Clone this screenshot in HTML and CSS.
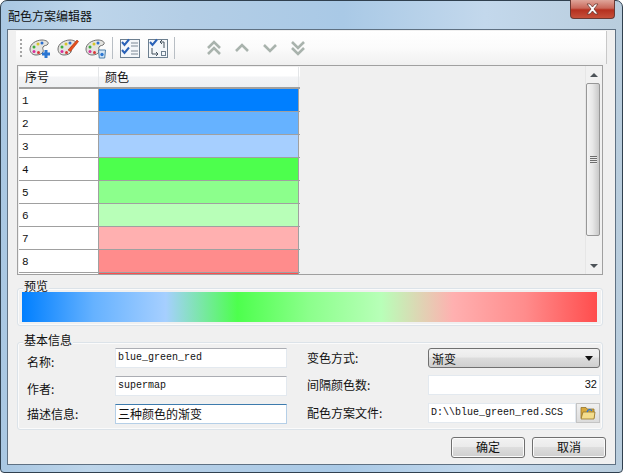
FILE: index.html
```html
<!DOCTYPE html>
<html lang="zh-CN">
<head>
  <meta charset="UTF-8" />
  <title>配色方案编辑器</title>
  <link rel="stylesheet" href="styles.css">
</head>
<body>
  <svg class="defs" width="0" height="0">
    <symbol id="palette" viewBox="0 0 22 22">
      <path d="M1 12C1 7 7 3 13 3c4 0 7 2 6 4-1 2-4 1-5 3-1 2 1 3 0 5-1 2-4 3-7 3-3 0-6-2-6-6z" fill="#e4e4e0" stroke="#6e6e6e"/>
      <circle cx="5" cy="10" r="1.5" fill="#3fae3a"/>
      <circle cx="9" cy="7" r="1.5" fill="#d8c52a"/>
      <circle cx="13" cy="6" r="1.5" fill="#2c6fd0"/>
      <circle cx="5" cy="14.5" r="1.5" fill="#d8309c"/>
      <circle cx="9.500" cy="15.500" r="1.500" fill="#d83a3a"/>
    </symbol>
  </svg>

  <div class="window">
    <div class="titlebar">
      <span class="title">配色方案编辑器</span>
      <div class="close">
        <svg width="17" height="12" viewBox="0 0 17 12"><path d="M3 1h3l2.500 3L11 1h3l-4 5 4 5h-3L8.500 8 6 11H3l4-5z" fill="#fff" stroke="#6b3a34" stroke-width=".8"/></svg>
      </div>
    </div>

    <div class="client">
      <div class="toolbar">
        <span class="grip"></span>
        <svg class="tool" width="22" height="22"><use href="#palette"/><path d="M13 17h8M17 13v8" stroke="#2a76d2" stroke-width="3"/></svg>
        <svg class="tool" width="22" height="22"><use href="#palette"/><path d="M11 13l9-10 1.500 1.500-8 10z" fill="#e8501c" stroke="#a83410" stroke-width=".6"/></svg>
        <svg class="tool" width="22" height="22"><use href="#palette"/><path d="M13.500 13h7l-.8 8h-5.400z" fill="#d5e6f4" stroke="#4c7ea8"/><circle cx="17" cy="17.500" r="1.700" fill="#2a76d2"/></svg>
        <span class="sep"></span>
        <svg class="tool" width="20" height="20" viewBox="0 0 20 20">
          <rect x=".5" y="1.500" width="19" height="18" fill="#f4f7fa" stroke="#6d7f8f"/>
          <path d="M11 5h7M11 8h7M11 13h7M11 16h7" stroke="#7c8a96" stroke-width="1.200"/>
          <path d="M2 4l2.500 3L9 1.500M2 12l2.500 3L9 9.500" fill="none" stroke="#2a62b8" stroke-width="2"/>
        </svg>
        <svg class="tool tool-b" width="20" height="20" viewBox="0 0 20 20">
          <rect x=".5" y="1.500" width="19" height="18" fill="#f4f7fa" stroke="#6d7f8f"/>
          <path d="M2 4l2.500 3L9 1.500" fill="none" stroke="#2a62b8" stroke-width="2"/>
          <path d="M4 10v6h6M8 14l2 2-2 2M16 10V4h-4M14 2l-2 2 2 2" fill="none" stroke="#44525e"/>
          <rect x="13.500" y="13.500" width="4" height="4" fill="none" stroke="#6d7f8f"/>
        </svg>
        <span class="sep sep-b"></span>
        <svg class="arrow" width="14" height="16" viewBox="0 0 14 16"><path d="M1 8l6-6 6 6M1 14l6-6 6 6" fill="none" stroke="#a9b3ad" stroke-width="2.600"/></svg>
        <svg class="arrow" width="14" height="16" viewBox="0 0 14 16"><path d="M1 11l6-6 6 6" fill="none" stroke="#a9b3ad" stroke-width="2.600"/></svg>
        <svg class="arrow" width="14" height="16" viewBox="0 0 14 16"><path d="M1 5l6 6 6-6" fill="none" stroke="#a9b3ad" stroke-width="2.600"/></svg>
        <svg class="arrow" width="14" height="16" viewBox="0 0 14 16"><path d="M1 2l6 6 6-6M1 8l6 6 6-6" fill="none" stroke="#a9b3ad" stroke-width="2.600"/></svg>
      </div>

      <div class="content">
        <div class="grid-panel">
          <div class="grid">
            <div class="row head"><div class="c1">序号</div><div class="c2">颜色</div></div>
            <div class="row"><div class="c1">1</div><div class="c2 s1"></div></div>
            <div class="row"><div class="c1">2</div><div class="c2 s2"></div></div>
            <div class="row"><div class="c1">3</div><div class="c2 s3"></div></div>
            <div class="row"><div class="c1">4</div><div class="c2 s4"></div></div>
            <div class="row"><div class="c1">5</div><div class="c2 s5"></div></div>
            <div class="row"><div class="c1">6</div><div class="c2 s6"></div></div>
            <div class="row"><div class="c1">7</div><div class="c2 s7"></div></div>
            <div class="row"><div class="c1">8</div><div class="c2 s8"></div></div>
            <div class="row"><div class="c1"></div><div class="c2 s9"></div></div>
          </div>
          <div class="scrollbar">
            <div class="sb-btn"><span class="tri up"></span></div>
            <div class="thumb"><span class="thumb-grip"></span></div>
            <div class="sb-space"></div>
            <div class="sb-btn"><span class="tri down"></span></div>
          </div>
        </div>

        <div class="group-title">预览</div>
        <div class="group preview"><div class="gradient"></div></div>

        <div class="group-title basic-title">基本信息</div>
        <div class="group form">
          <div class="form-col">
            <div class="field f-a"><span class="lbl lbl-low">名称:</span><div class="box mono">blue_green_red</div></div>
            <div class="field f-b"><span class="lbl lbl-low2">作者:</span><div class="box mono">supermap</div></div>
            <div class="field"><span class="lbl">描述信息:</span><div class="box focus">三种颜色的渐变</div></div>
          </div>
          <div class="form-col right">
            <div class="field f-a"><span class="lbl">变色方式:</span>
              <div class="select"><span>渐变</span><span class="tri down dark"></span></div>
            </div>
            <div class="field f-c"><span class="lbl">间隔颜色数:</span><div class="box num">32</div></div>
            <div class="field"><span class="lbl">配色方案文件:</span>
              <div class="file">
                <div class="box mono file-path">D:\\blue_green_red.SCS</div>
                <div class="folder-btn">
                  <svg width="16" height="14" viewBox="0 0 16 14">
                    <path d="M1 3V1.500h5l1 1.500h7v9H1z" fill="#d9a93c" stroke="#94742a" stroke-width=".8"/>
                    <path d="M1 13l2-7h12l-1 7z" fill="#f4dd8c" stroke="#94742a" stroke-width=".8"/>
                    <path d="M7 6c1-3 4-3 5-1" fill="none" stroke="#2a76d2" stroke-width="1.200"/>
                  </svg>
                </div>
              </div>
            </div>
          </div>
        </div>

        <div class="buttons">
          <div class="btn">确定</div>
          <div class="btn">取消</div>
        </div>
      </div>
    </div>
  </div>
</body>
</html>
```

FILE: styles.css
```css
html, body {
  margin: 0;
  padding: 0;
}
body {
  width: 623px;
  height: 473px;
  overflow: hidden;
  background: #fff;
  font-family: "Noto Sans CJK SC", "Liberation Sans", sans-serif;
  font-size: 12px;
  color: #111;
}
.defs {
  display: block;
  height: 0;
}
.window {
  box-sizing: border-box;
  width: 623px;
  height: 473px;
  border: 1px solid #30404f;
  border-radius: 7px 7px 4px 4px;
  background: linear-gradient(90deg, #a9c7e2 0%, #bdd5ea 14%, #b4cee6 30%, #a9c9e6 55%, #c3d8ec 78%, #b9cddd 100%);
  padding: 0 6px 7px 6px;
  display: flex;
  flex-direction: column;
}
.titlebar {
  height: 28px;
  display: flex;
  justify-content: space-between;
  flex-shrink: 0;
}
.title {
  margin: 7px 0 0 1px;
  line-height: 16px;
}
.close {
  width: 45px;
  height: 19px;
  margin-top: -1px;
  margin-right: 1px;
  box-sizing: border-box;
  border: 1px solid #6b3a34;
  border-top: 0;
  border-radius: 0 0 4px 4px;
  background: linear-gradient(#dfa59a 0%, #c9685a 45%, #b5301f 55%, #c6503a 100%);
  display: flex;
  align-items: center;
  justify-content: center;
}
.client {
  flex: 1;
  border: 1px solid #5f7183;
  background: #f0f0f0;
  position: relative;
}
.toolbar {
  margin: 1px 8px 0 8px;
  height: 33px;
  background: linear-gradient(#fff 0%, #fbfbfb 50%, #f1f1f1 100%);
  display: flex;
  align-items: center;
  box-sizing: border-box;
  padding-left: 4px;
  border-right: 1px solid #c8c8c8;
}
.grip {
  width: 2px;
  height: 18px;
  background: repeating-linear-gradient(#a5a5a5 0 2px, transparent 2px 4px);
  margin-right: 7px;
}
.tool {
  margin-right: 6px;
}
.tool-b {
  margin-left: 2px;
  margin-right: 0;
}
.sep {
  width: 1px;
  height: 22px;
  background: #b8bec4;
  margin: 0 7px 0 -1px;
}
.sep-b {
  margin-left: 6px;
  margin-right: 32px;
}
.arrow {
  margin-right: 14px;
}
.content {
  padding-left: 9px;
  width: 586px;
}
.grid-panel {
  margin-top: 1px;
  height: 210px;
  box-sizing: border-box;
  border: 1px solid #a0a0a0;
  background: #f0f0f0;
  display: flex;
  justify-content: space-between;
}
.grid {
  width: 281px;
  overflow: hidden;
  padding: 1px 0 0 1px;
  flex-shrink: 0;
}
.row {
  display: flex;
  height: 23px;
  box-sizing: border-box;
  border-bottom: 1px solid #a0a0a0;
}
.row.head {
  height: 22px;
  border-bottom: 2px solid #a0a0a0;
  background: linear-gradient(#fff 0%, #fff 45%, #f3f4f6 50%, #eef0f2 100%);
}
.c1 {
  width: 80px;
  box-sizing: border-box;
  padding-left: 3px;
  background: #fff;
  border-right: 1px solid #a0a0a0;
  line-height: 25px;
  overflow: hidden;
  font-family: "Liberation Mono", monospace;
  font-size: 11px;
}
.c2 {
  width: 200px;
  box-sizing: border-box;
  border-right: 1px solid #a0a0a0;
}
.head .c1, .head .c2 {
  background: transparent;
  border-right: 1px solid #e4e6e8;
  font-family: "Noto Sans CJK SC", sans-serif;
  font-size: 12px;
  line-height: 20px;
  padding-left: 6px;
}
.s1 { background: #007fff; }
.s2 { background: #66b2ff; }
.s3 { background: #a6cfff; }
.s4 { background: #4dff4d; }
.s5 { background: #8cff8c; }
.s6 { background: #b8ffb8; }
.s7 { background: #ffb0b0; }
.s8 { background: #ff8c8c; }
.s9 { background: #ff4d4d; }
.scrollbar {
  width: 16px;
  display: flex;
  flex-direction: column;
  background: #f1f1f1;
  border-left: 1px solid #e6e6e6;
}
.sb-btn {
  height: 17px;
  display: flex;
  align-items: center;
  justify-content: center;
}
.tri {
  width: 0;
  height: 0;
  border-left: 4px solid transparent;
  border-right: 4px solid transparent;
}
.tri.up {
  border-bottom: 4px solid #4d5358;
}
.tri.down {
  border-top: 4px solid #4d5358;
}
.tri.dark {
  border-left-width: 4px;
  border-right-width: 4px;
  border-top: 5px solid #111;
}
.thumb {
  height: 153px;
  margin-left: 0;
  width: 14px;
  box-sizing: border-box;
  border: 1px solid #979797;
  border-radius: 2px;
  background: linear-gradient(90deg, #f4f4f4 0%, #e8e8e8 45%, #c9c9c9 100%);
  display: flex;
  align-items: center;
  justify-content: center;
}
.thumb-grip {
  width: 7px;
  height: 8px;
  background: repeating-linear-gradient(#6d6d6d 0 1px, #e9e9e9 1px 2px);
}
.sb-space {
  flex: 1;
}
.group-title {
  margin: 4px 0 0 6px;
  padding: 0 1px;
  width: max-content;
  background: #f0f0f0;
  line-height: 13px;
  height: 13px;
  position: relative;
  z-index: 1;
}
.basic-title {
  margin-top: 7px;
}
.group {
  box-sizing: border-box;
  margin-top: -4px;
  border: 1px solid #dce3e9;
  box-shadow: inset 0 0 0 1px #fbfbfb;
  border-radius: 3px;
}
.preview {
  height: 38px;
  padding: 3px 5px 0 4px;
}
.gradient {
  height: 30px;
  position: relative;
  z-index: 2;
  background: linear-gradient(90deg, #007fff 0%, #66b2ff 12.500%, #a6cfff 25%, #4dff4d 37.500%, #8cff8c 50%, #b8ffb8 62.500%, #ffb0b0 75%, #ff8c8c 87.500%, #ff4d4d 100%);
}
.form {
  height: 88px;
  padding: 5px 2px 0 9px;
  display: flex;
  justify-content: space-between;
}
.form-col {
  width: 260px;
  display: flex;
  flex-direction: column;
}
.form-col.right {
  width: 293px;
}
.field {
  display: flex;
  align-items: center;
  justify-content: space-between;
  height: 20px;
}
.f-a {
  margin-bottom: 8px;
}
.f-b {
  margin-bottom: 8px;
}
.f-c {
  margin-bottom: 8px;
  margin-top: -1px;
}
.lbl {
  line-height: 14px;
}
.lbl-low {
  position: relative;
  top: 4px;
}
.lbl-low2 {
  position: relative;
  top: 3px;
}
.box {
  box-sizing: border-box;
  width: 172px;
  height: 20px;
  background: #fff;
  border: 1px solid #e3e9ef;
  border-top-color: #abadb3;
  padding-left: 2px;
  line-height: 17px;
  white-space: nowrap;
  overflow: hidden;
}
.mono {
  font-family: "Liberation Mono", monospace;
  font-size: 10px;
}
.focus {
  border-color: #b5cfe7;
  border-top-color: #3d7bad;
  font-size: 12px;
}
.num {
  text-align: right;
  padding-right: 2px;
  border-top-color: #e3e9ef;
  font-family: "Liberation Sans", sans-serif;
  font-size: 11px;
}
.select {
  box-sizing: border-box;
  width: 172px;
  height: 20px;
  border: 1px solid #707070;
  border-radius: 3px;
  background: linear-gradient(#f2f2f2 0%, #ebebeb 45%, #dcdcdc 50%, #cfcfcf 100%);
  padding: 0 6px 0 3px;
  display: flex;
  align-items: center;
  justify-content: space-between;
}
.file {
  display: flex;
  width: 172px;
}
.file-path {
  width: 148px;
  border-top-color: #e3e9ef;
}
.folder-btn {
  width: 24px;
  height: 20px;
  box-sizing: border-box;
  border: 1px solid #c4c4c4;
  background: linear-gradient(#f0f0f0, #dcdcdc);
  display: flex;
  align-items: center;
  justify-content: center;
}
.buttons {
  display: flex;
  justify-content: flex-end;
  gap: 7px;
  margin-top: 7px;
  margin-right: -3px;
}
.btn {
  box-sizing: border-box;
  width: 74px;
  height: 21px;
  border: 1px solid #707070;
  border-radius: 3px;
  background: linear-gradient(#f2f2f2 0%, #ebebeb 45%, #dddddd 50%, #cfcfcf 100%);
  box-shadow: inset 0 0 0 1px #fbfbfb;
  text-align: center;
  line-height: 18px;
}
```
